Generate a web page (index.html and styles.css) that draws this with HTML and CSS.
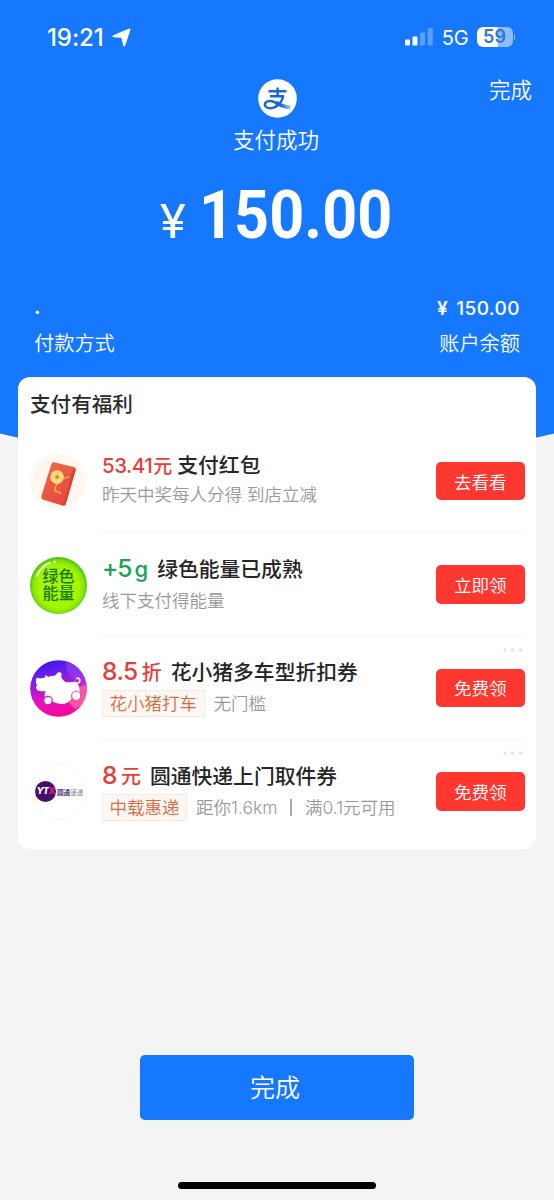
FILE: index.html
```html
<!DOCTYPE html>
<html lang="zh-CN">
<head>
<meta charset="utf-8">
<title>支付成功</title>
<link rel="stylesheet" href="styles.css">
</head>
<body>
<div class="page">
  <div class="hero">
    <div class="status">
      <span class="time">19:21</span>
      <svg class="arrow" width="19" height="19" viewBox="0 0 19 19"><path d="M16.800.7Q19 0 18.300 2.200L13.200 17.500Q12.300 19.300 11.200 17.600L9.600 10.600Q9.400 9.900 8.700 9.800L1.300 9.300Q-.5 8.400 1.200 7.300Z" fill="#fff"/></svg>
      <span class="grow"></span>
      <svg class="signal" width="28" height="18" viewBox="0 0 28 18"><rect x="0" y="11.5" width="5" height="6" rx="1.2" fill="#fff"/><rect x="7.5" y="8.5" width="5" height="9" rx="1.2" fill="#fff"/><rect x="15" y="4.5" width="5" height="13" rx="1.2" fill="#fff" opacity=".3"/><rect x="22.7" y="0" width="5" height="17.5" rx="1.2" fill="#fff" opacity=".3"/></svg>
      <span class="net">5G</span>
      <span class="battery">59</span><span class="cap"></span>
    </div>
    <div class="nav">
      <span></span>
      <svg class="logo" width="39" height="39" viewBox="0 0 39 39"><defs><linearGradient id="tail" x1="0" x2="1"><stop offset=".35" stop-color="#1668d6"/><stop offset="1" stop-color="#a9c9f8"/></linearGradient></defs><circle cx="19.5" cy="19.5" r="19.3" fill="#fff"/><g fill="none" stroke="#1668d6" stroke-width="2.4"><path d="M10.5 12.3H28.5M12 17.3H26M19.6 8.6V17"/><path d="M25.3 17.2C24 22.5 19.5 29.2 12.3 29.2 7.8 29.2 5.8 26.6 7.4 24 9.5 20.6 15.2 22 18.6 24.2"/><path d="M17.5 23.4C22 26 26 28.3 32.6 28.4" stroke="url(#tail)" stroke-width="3.8"/></g></svg>
      <span class="done">完成</span>
    </div>
    <div class="result">支付成功</div>
    <div class="amount"><span class="yen">¥</span><span class="num">150.00</span></div>
    <div class="detail top"><span class="dot">.</span><span class="paid"><i class="sign">¥</i>150.00</span></div>
    <div class="detail"><span>付款方式</span><span>账户余额</span></div>
  </div>

  <div class="card">
    <h2 class="heading">支付有福利</h2>

    <div class="row first">
      <svg class="icon" width="58" height="58" viewBox="0 0 58 58"><defs><linearGradient id="env" x1="0" y1="0" x2=".6" y2="1"><stop offset="0" stop-color="#ef6d4b"/><stop offset="1" stop-color="#e6483b"/></linearGradient></defs><circle cx="29" cy="29" r="28.5" fill="#fff7f0"/><path d="M24.5 9.5 44.5 14.3Q47.2 15 46.4 17.5L36.300 52Q35.5 54.300 33 53.5L13 47.2Q11 46.300 11.500 44L21.700 11.500Q22.400 9.200 24.500 9.500Z" fill="url(#env)"/><path d="M46.500 16.800 36 53.200 34 52.700 44 17Z" fill="#d73f35"/><path d="M20 29Q36 34 45 18" fill="none" stroke="#c94235" stroke-width="1"/><circle cx="27.500" cy="24.500" r="7" fill="#fbd978"/><circle cx="27.500" cy="24.500" r="2" fill="#c98b3f"/><path d="M28 31C25 35 24 38 27 39S31 40 31 42M35 26 40 24" fill="none" stroke="#f5bd5a" stroke-width="1.300"/></svg>
      <div class="body">
        <div class="title"><b class="price small">53.41<i>元</i></b><span>支付红包</span></div>
        <div class="sub"><span>昨天中奖每人分得 到店立减</span></div>
      </div>
      <button class="action">去看看</button>
    </div>

    <div class="row">
      <div class="icon energy"><span>绿色</span><span>能量</span><svg class="shine" width="56" height="56" viewBox="0 0 56 56"><path d="M7 19Q11 9 20 6" fill="none" stroke="#efffbd" stroke-width="2" stroke-linecap="round"/><circle cx="24.500" cy="5" r="1.300" fill="#efffbd"/></svg></div>
      <div class="body">
        <div class="title"><b class="price green">+5<i>g</i></b><span>绿色能量已成熟</span></div>
        <div class="sub"><span>线下支付得能量</span></div>
      </div>
      <button class="action">立即领</button>
    </div>

    <div class="row">
      <svg class="icon" width="58" height="58" viewBox="0 0 58 58"><defs><linearGradient id="pig" x1=".35" y1="0" x2=".6" y2="1"><stop offset="0" stop-color="#3518ee"/><stop offset=".3" stop-color="#8020e8"/><stop offset=".62" stop-color="#e312c0"/><stop offset="1" stop-color="#fb0796"/></linearGradient><clipPath id="disc"><circle cx="29" cy="29" r="28.800"/></clipPath></defs><g clip-path="url(#disc)"><rect width="58" height="58" fill="url(#pig)"/><path d="M36 0H58V28L46 22 38 12Z" fill="#9b45ee" opacity=".55"/><path d="M50 27 58 25V42L46 50 38 42Z" fill="#fa6a9d" opacity=".8"/></g><path d="M6 19.500Q7.500 17 10 18.700L15 18 16 15.300 18.500 17.300Q22 15.700 25.300 16L28.300 12.700Q31 12 32.200 13.700L31.800 17.500Q33.500 21 36 22.300 41 23 46 22 49 23.500 50 28L51 34 46 38 42 39.500Q38 45 32 44.800 26 44.500 21 41.500 16 40.500 14.800 36.500 15 33 16 31.500 12 32.500 8 31 4.500 28.500 7.300 26 5.500 23 6 19.500Z" fill="#fff"/><path d="M47.500 24Q51.500 23 50.500 19.500 48 17 47.500 19.800" fill="none" stroke="#fff" stroke-width="1.500"/><circle cx="18.300" cy="41.300" r="4.300" fill="#fff" stroke="#d51ebd" stroke-width="1.200"/><circle cx="47" cy="36.500" r="4.700" fill="#fff" stroke="#ef4cab" stroke-width="1.200"/></svg>
      <div class="body">
        <div class="title"><b class="price">8.5<i>折</i></b><span>花小猪多车型折扣券</span></div>
        <div class="sub"><span class="tag">花小猪打车</span><span>无门槛</span></div>
      </div>
      <svg class="more" width="20" height="4" viewBox="0 0 20 4"><g fill="#e4e4e4"><circle cx="2" cy="2" r="1.700"/><circle cx="9.500" cy="2" r="1.700"/><circle cx="17.500" cy="2" r="1.700"/></g></svg>
      <button class="action">免费领</button>
    </div>

    <div class="row">
      <div class="icon yto"><span class="ball">YT<em>X</em></span><span class="brand">圆通<i>速递</i></span></div>
      <div class="body">
        <div class="title"><b class="price">8<i>元</i></b><span>圆通快递上门取件券</span></div>
        <div class="sub"><span class="tag">中载惠递</span><span>距你1.6km</span><span class="bar"></span><span>满0.1元可用</span></div>
      </div>
      <svg class="more" width="20" height="4" viewBox="0 0 20 4"><g fill="#e4e4e4"><circle cx="2" cy="2" r="1.700"/><circle cx="9.500" cy="2" r="1.700"/><circle cx="17.500" cy="2" r="1.700"/></g></svg>
      <button class="action">免费领</button>
    </div>
  </div>

  <button class="finish">完成</button>
  <div class="home"></div>
</div>
</body>
</html>
```
FILE: styles.css
```css
* { box-sizing: border-box; }
body { margin: 0; }
i, em { font-style: normal; }
button { border: 0; padding: 0; font-family: inherit; }

.page {
  width: 554px;
  height: 1200px;
  overflow: hidden;
  background: #f4f4f4;
  font-family: Inter, "Noto Sans CJK SC", sans-serif;
  display: flex;
  flex-direction: column;
  align-items: center;
}

.hero {
  width: 554px;
  height: 500px;
  flex: none;
  background: #1678ff;
  color: #fff;
  clip-path: polygon(0 0, 100% 0, 100% 433.5px, 50% 498px, 0 433.5px);
}

.status {
  display: flex;
  align-items: center;
  height: 74px;
  padding: 0 39px 0 47px;
}
.time { font-size: 24px; font-weight: 550; letter-spacing: -0.1px; }
.arrow { margin-left: 8px; }
.grow { flex: 1; }
.net { margin: 2px 8px 0 9px; font-size: 20px; letter-spacing: -0.2px; }
.battery {
  width: 36px;
  height: 20px;
  border-radius: 6px;
  background: linear-gradient(90deg, #fff 57%, #8dbdff 57%);
  color: #2b78df;
  font-size: 18px;
  font-weight: 600;
  line-height: 20px;
  text-align: center;
}
.cap { width: 1.5px; height: 6px; margin-left: 1px; border-radius: 0 2px 2px 0; background: #8dbdff; }

.nav {
  display: grid;
  grid-template-columns: 1fr 39px 1fr;
  height: 50px;
  padding: 5px 22px 0 22px;
}
.done { justify-self: end; font-size: 21.5px; line-height: 22px; font-weight: 350; }
.result { text-align: center; font-size: 21.5px; line-height: 32px; height: 30px; font-weight: 350; padding-right: 2px; }

.amount {
  display: flex;
  align-items: baseline;
  height: 144px;
  padding: 21px 0 0 160px;
  font-family: Roboto, sans-serif;
}
.yen { width: 39px; font-size: 49px; line-height: 82px; font-weight: 400; }
.num {
  font-size: 66px;
  font-weight: 700;
  line-height: 82px;
  letter-spacing: .1px;
  transform: scaleX(.925);
  transform-origin: 0 50%;
}

.detail {
  display: flex;
  justify-content: space-between;
  padding: 0 34px;
  font-size: 20.2px;
  font-weight: 350;
  line-height: 40px;
  height: 36px;
}
.detail.top { line-height: 42px; margin-top: -10px; }
.dot { font-weight: 600; line-height: 38px; }
.paid { font-size: 19px; font-weight: 500; letter-spacing: .45px; }
.sign { margin-right: 8px; font-weight: 600; }

.card {
  width: 518px;
  height: 472px;
  flex: none;
  margin-top: -123px;
  padding: 0 12px;
  border-radius: 12px;
  background: #fff;
}
.card { position: relative; }
.heading {
  margin: 0;
  height: 53px;
  font-size: 20.6px;
  line-height: 56px;
  font-weight: 500;
  color: #2b2b2b;
}
.row {
  position: relative;
  display: grid;
  grid-template-columns: 72px 1fr 88.5px;
  align-items: center;
  height: 103.4px;
}
.row:not(:last-child)::after {
  content: "";
  position: absolute;
  left: 69px;
  right: 0;
  bottom: 0;
  height: 1px;
  background: #f5f5f5;
}
.icon { width: 57px; height: 57px; }
.action {
  grid-column: 3;
  height: 38.5px;
  margin-right: -0.5px;
  margin-left: .5px;
  margin-top: -1px;
  border-radius: 5px;
  background: #ff382f;
  color: #fff;
  font-size: 17.5px;
  font-weight: 350;
}
.more { position: absolute; right: 1px; top: 11px; }

.body { display: flex; flex-direction: column; gap: 5px; padding-bottom: 2px; white-space: nowrap; }
.title {
  display: flex;
  align-items: baseline;
  height: 28px;
  line-height: 28px;
  font-size: 20.8px;
  font-weight: 500;
  color: #262626;
}
.sub {
  display: flex;
  align-items: center;
  height: 27px;
  line-height: 27px;
  font-size: 17.5px;
  font-weight: 350;
  color: #999;
}
.first .body { gap: 1px; padding-bottom: 3px; }
.price { margin-right: 9px; font-size: 24.5px; font-weight: 550; letter-spacing: -0.5px; color: #e83e39; }
.price i { margin-left: 4px; font-size: 20px; font-weight: 500; letter-spacing: 0; }
.price.small { margin-right: 5px; font-size: 20.5px; letter-spacing: -0.5px; }
.price.small i { margin-left: 1px; font-size: 19px; }
.price.green { color: #1ba354; letter-spacing: -1px; }
.price.green i { margin-left: 3px; font-size: 22px; font-weight: 550; }
.tag {
  margin-right: 9px;
  padding: 0 6.5px;
  height: 27px;
  line-height: 25px;
  border: 1px solid #fbeae3;
  background: #fff7f3;
  color: #dc6b40;
}
.bar { width: 1.5px; height: 17px; margin: 0 13px; background: #aaa; }

.energy {
  position: relative;
  display: flex;
  flex-direction: column;
  align-items: center;
  padding-top: 11px;
  border-radius: 50%;
  background: radial-gradient(circle at 50% 52%, #a4f500 0 50%, #86e60c 62%, #50c310 70%);
  color: #187a1b;
  font-size: 16px;
  line-height: 17.5px;
  font-weight: 500;
}
.shine { position: absolute; left: 0; top: 0; }

.yto {
  display: flex;
  align-items: center;
  padding-left: 4px;
  border: 1px solid #f8f8f8;
  border-radius: 50%;
  white-space: nowrap;
}
.ball {
  width: 21px;
  height: 21px;
  flex: none;
  border-radius: 50%;
  background: #45106b;
  color: #fff;
  font-size: 9.5px;
  line-height: 20px;
  font-weight: 800;
  font-style: italic;
  text-align: center;
  letter-spacing: -1px;
}
.ball em { color: #d81b8d; }
.brand { margin-left: 1px; font-size: 6.6px; font-weight: 700; color: #50316b; }
.brand i { font-weight: 400; color: #8d8298; }

.finish {
  width: 274px;
  height: 65.5px;
  flex: none;
  margin: 205.500px 0 0 0;
  border-radius: 5px;
  background: #1678ff;
  color: #fff;
  font-size: 25px;
  font-weight: 350;
  padding: 0 4px 3px 0;
}
.home { width: 198px; height: 7px; flex: none; margin-top: 61.5px; border-radius: 4px; background: #000; }
```
